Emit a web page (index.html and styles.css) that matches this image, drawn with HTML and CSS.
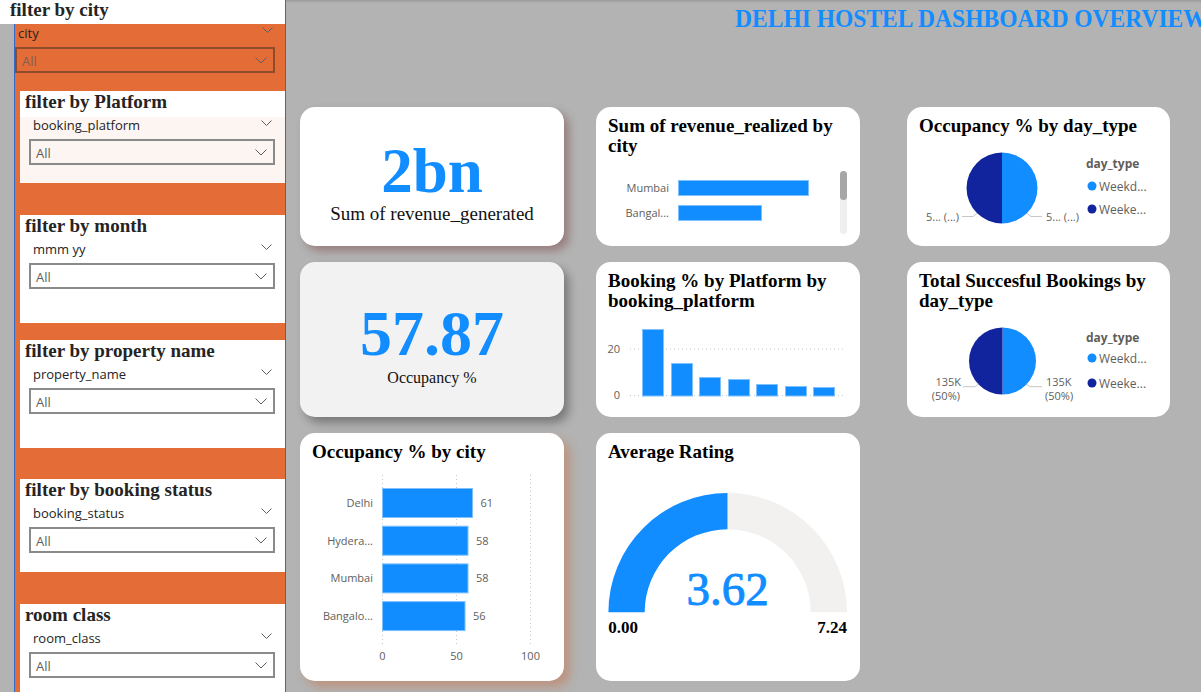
FILE: index.html
```html
<!DOCTYPE html>
<html>
<head>
<meta charset="utf-8">
<title>Delhi Hostel Dashboard</title>
<link rel="stylesheet" href="styles.css">
</head>
<body>
<aside class="side">
  <div class="side-head">filter by city</div>
  <div class="side-panel">
    <div class="s-row city-row"><span>city</span><svg class="chev" width="11" height="7" viewBox="0 0 11 7"><polyline points="0.5,0.5 5.5,5.5 10.5,0.5"/></svg></div>
    <div class="s-box city-box"><span>All</span><svg class="chev" width="12" height="7" viewBox="0 0 12 7"><polyline points="0.5,0.5 6,6 11.5,0.5"/></svg></div>

    <section class="slicer cream gap-a pb-s">
      <div class="s-title">filter by Platform</div>
      <div class="s-body">
        <div class="s-row"><span>booking_platform</span><svg class="chev" width="11" height="7" viewBox="0 0 11 7"><polyline points="0.5,0.5 5.5,5.5 10.5,0.5"/></svg></div>
        <div class="s-box"><span>All</span><svg class="chev" width="12" height="7" viewBox="0 0 12 7"><polyline points="0.5,0.5 6,6 11.5,0.5"/></svg></div>
      </div>
    </section>

    <section class="slicer gap-b pb-l">
      <div class="s-title">filter by month</div>
      <div class="s-body">
        <div class="s-row"><span>mmm yy</span><svg class="chev" width="11" height="7" viewBox="0 0 11 7"><polyline points="0.5,0.5 5.5,5.5 10.5,0.5"/></svg></div>
        <div class="s-box"><span>All</span><svg class="chev" width="12" height="7" viewBox="0 0 12 7"><polyline points="0.5,0.5 6,6 11.5,0.5"/></svg></div>
      </div>
    </section>

    <section class="slicer gap-c pb-l">
      <div class="s-title">filter by property name</div>
      <div class="s-body">
        <div class="s-row"><span>property_name</span><svg class="chev" width="11" height="7" viewBox="0 0 11 7"><polyline points="0.5,0.5 5.5,5.5 10.5,0.5"/></svg></div>
        <div class="s-box"><span>All</span><svg class="chev" width="12" height="7" viewBox="0 0 12 7"><polyline points="0.5,0.5 6,6 11.5,0.5"/></svg></div>
      </div>
    </section>

    <section class="slicer gap-d pb-m">
      <div class="s-title">filter by booking status</div>
      <div class="s-body">
        <div class="s-row"><span>booking_status</span><svg class="chev" width="11" height="7" viewBox="0 0 11 7"><polyline points="0.5,0.5 5.5,5.5 10.5,0.5"/></svg></div>
        <div class="s-box"><span>All</span><svg class="chev" width="12" height="7" viewBox="0 0 12 7"><polyline points="0.5,0.5 6,6 11.5,0.5"/></svg></div>
      </div>
    </section>

    <section class="slicer gap-b pb-l">
      <div class="s-title">room class</div>
      <div class="s-body">
        <div class="s-row"><span>room_class</span><svg class="chev" width="11" height="7" viewBox="0 0 11 7"><polyline points="0.5,0.5 5.5,5.5 10.5,0.5"/></svg></div>
        <div class="s-box"><span>All</span><svg class="chev" width="12" height="7" viewBox="0 0 12 7"><polyline points="0.5,0.5 6,6 11.5,0.5"/></svg></div>
      </div>
    </section>
  </div>
</aside>

<main class="main">
  <header class="dash-title"><span>DELHI HOSTEL DASHBOARD OVERVIEW</span></header>
  <div class="grid">
    <!-- row 1 -->
    <div class="card kpi kpi-rev">
      <div class="kpi-val">2bn</div>
      <div class="kpi-lbl">Sum of revenue_generated</div>
    </div>

    <div class="card">
      <div class="ctitle">Sum of revenue_realized by city</div>
      <svg class="chart" width="264" height="87" viewBox="0 0 264 87">
        <text x="73" y="33" text-anchor="end">Mumbai</text>
        <rect class="bar" x="82.5" y="21.5" width="130" height="15"/>
        <text x="73" y="58" text-anchor="end">Bangal...</text>
        <rect class="bar" x="82.5" y="46.5" width="83" height="15"/>
        <rect x="244" y="12" width="7" height="63" rx="3.5" fill="#efefef"/>
        <rect x="244" y="12" width="7" height="29" rx="3.5" fill="#a6a6a6"/>
      </svg>
    </div>

    <div class="card c3">
      <div class="ctitle one">Occupancy % by day_type</div>
      <svg class="chart" width="263" height="103" viewBox="0 0 263 103">
        <path d="M95 45 L95 9.5 A35.5 35.5 0 0 1 95 80.5 Z" fill="#118dff"/>
        <path d="M95 45 L95 80.5 A35.5 35.5 0 0 1 95 9.5 Z" fill="#12239e"/>
        <polyline class="lead" points="55,73.5 66,73.5 70,70.3"/>
        <polyline class="lead" points="120,70.3 124,73.5 135,73.5"/>
        <text x="52" y="78" text-anchor="end">5... (...)</text>
        <text x="139" y="78">5... (...)</text>
        <text class="lg-title" x="179" y="25">day_type</text>
        <circle cx="185" cy="43" r="4.5" fill="#118dff"/>
        <text class="lg" x="192" y="47.5">Weekd...</text>
        <circle cx="185" cy="66" r="4.5" fill="#12239e"/>
        <text class="lg" x="192" y="70.5">Weeke...</text>
      </svg>
    </div>

    <!-- row 2 -->
    <div class="card kpi kpi-occ">
      <div class="kpi-val">57.87</div>
      <div class="kpi-lbl small">Occupancy %</div>
    </div>

    <div class="card">
      <div class="ctitle">Booking % by Platform by booking_platform</div>
      <svg class="chart" width="264" height="103" viewBox="0 0 264 103">
        <line class="grid-h" x1="34" y1="35" x2="249" y2="35"/>
        <line class="grid-h" x1="34" y1="81.5" x2="249" y2="81.5"/>
        <text x="24" y="39" text-anchor="end">20</text>
        <text x="24" y="85" text-anchor="end">0</text>
        <rect class="bar" x="46.5" y="15.5" width="21" height="66.5"/>
        <rect class="bar" x="75.5" y="49.5" width="21" height="32.5"/>
        <rect class="bar" x="103.5" y="63.5" width="21" height="18.5"/>
        <rect class="bar" x="132.5" y="65.5" width="21" height="16.5"/>
        <rect class="bar" x="160.5" y="70.5" width="21" height="11.5"/>
        <rect class="bar" x="189.5" y="72.5" width="21" height="9.5"/>
        <rect class="bar" x="217.5" y="73.5" width="21" height="8.5"/>
      </svg>
    </div>

    <div class="card c3">
      <div class="ctitle">Total Succesful Bookings by day_type</div>
      <svg class="chart" width="263" height="103" viewBox="0 0 263 103">
        <path d="M95.5 47 L95.5 13.5 A33.5 33.5 0 0 1 95.5 80.5 Z" fill="#118dff"/>
        <path d="M95.5 47 L95.5 80.5 A33.5 33.5 0 0 1 95.5 13.5 Z" fill="#12239e"/>
        <polyline class="lead" points="56,72.7 68,72.7 71.5,70"/>
        <polyline class="lead" points="119.5,70 123,72.7 135,72.7"/>
        <text x="54" y="72" text-anchor="end">135K</text>
        <text x="53" y="86" text-anchor="end">(50%)</text>
        <text x="139" y="72">135K</text>
        <text x="138" y="86">(50%)</text>
        <text class="lg-title" x="179" y="28">day_type</text>
        <circle cx="185" cy="44" r="4.5" fill="#118dff"/>
        <text class="lg" x="192" y="48.5">Weekd...</text>
        <circle cx="185" cy="69" r="4.5" fill="#12239e"/>
        <text class="lg" x="192" y="73.5">Weeke...</text>
      </svg>
    </div>

    <!-- row 3 -->
    <div class="card occ-city">
      <div class="ctitle one">Occupancy % by city</div>
      <svg class="chart" width="264" height="212" viewBox="0 0 264 212">
        <line class="grid-v" x1="82.5" y1="6" x2="82.5" y2="176"/>
        <line class="grid-v" x1="156.5" y1="6" x2="156.5" y2="176"/>
        <line class="grid-v" x1="230.5" y1="6" x2="230.5" y2="176"/>
        <rect class="bar" x="82.5" y="19.5" width="90" height="29"/>
        <rect class="bar" x="82.5" y="57.2" width="85.5" height="29"/>
        <rect class="bar" x="82.5" y="94.9" width="85.5" height="29"/>
        <rect class="bar" x="82.5" y="132.6" width="82.5" height="29"/>
        <text x="73" y="38" text-anchor="end">Delhi</text>
        <text x="73" y="75.7" text-anchor="end">Hydera...</text>
        <text x="73" y="113.4" text-anchor="end">Mumbai</text>
        <text x="73" y="151.1" text-anchor="end">Bangalo...</text>
        <text x="180.5" y="38">61</text>
        <text x="176" y="75.7">58</text>
        <text x="176" y="113.4">58</text>
        <text x="173" y="151.1">56</text>
        <text x="82.5" y="191" text-anchor="middle">0</text>
        <text x="156.5" y="191" text-anchor="middle">50</text>
        <text x="230.5" y="191" text-anchor="middle">100</text>
      </svg>
    </div>

    <div class="card">
      <div class="ctitle one">Average Rating</div>
      <svg class="chart" width="264" height="212" viewBox="0 0 264 212">
        <path d="M12.4 143.3 A119.3 119.3 0 0 1 131.7 24 L131.7 60.3 A83 83 0 0 0 48.7 143.3 Z" fill="#118dff"/>
        <path d="M131.7 24 A119.3 119.3 0 0 1 251 143.3 L214.7 143.3 A83 83 0 0 0 131.7 60.3 Z" fill="#f2f1ef"/>
        <text class="gauge-val" x="131.7" y="136" text-anchor="middle">3.62</text>
        <text class="gauge-end" x="12.3" y="164.3">0.00</text>
        <text class="gauge-end" x="251" y="164.3" text-anchor="end">7.24</text>
      </svg>
    </div>
  </div>
</main>
</body>
</html>
```
FILE: styles.css
```css
* { box-sizing: border-box; }

html, body {
  margin: 0;
  padding: 0;
}

body {
  width: 1201px;
  height: 692px;
  overflow: hidden;
  display: flex;
  background: #b3b3b3;
  font-family: "Liberation Serif", serif;
  color: #252423;
}

/* ---------- sidebar ---------- */
.side {
  width: 286px;
  flex: none;
  display: flex;
  flex-direction: column;
  background: #b3b3b3;
  border-right: 1px solid #2f6bc7;
}

.side-head {
  height: 24px;
  flex: none;
  background: #fff;
  padding: 0 0 0 10px;
  font-weight: bold;
  font-size: 19px;
  line-height: 20px;
  color: #252423;
  white-space: nowrap;
}

.side-panel {
  flex: 1;
  margin-left: 14px;
  border-left: 1px solid #2f6bc7;
  background: #e46c37;
  padding-top: 1px;
  overflow: hidden;
}

.s-row {
  display: flex;
  justify-content: space-between;
  align-items: flex-start;
  height: 16px;
  padding: 0 13px;
  font-family: "Open Sans", sans-serif;
  font-size: 13px;
  line-height: 16px;
  color: #252423;
}

.chev {
  display: block;
  flex: none;
  fill: none;
  stroke: #605e5c;
  stroke-width: 1;
}

.s-row .chev {
  margin-top: 3px;
}

.city-row {
  padding: 0 12px 0 3px;
}

.city-row .chev {
  margin-top: 2px;
}

.s-box {
  margin: 6px 10px 0 9px;
  height: 26px;
  border: 2px solid #8a8a8a;
  display: flex;
  justify-content: space-between;
  align-items: center;
  padding: 2px 6px 0 5px;
  font-family: "Open Sans", sans-serif;
  font-size: 13px;
  color: #605e5c;
}

.s-box .chev {
  margin-top: -2px;
}

.city-box {
  margin: 6px 10px 0 0;
  border-color: #8c4b2c;
  color: #83604f;
}

.slicer {
  margin-left: 5px;
  background: #fff;
}

.s-title {
  height: 26px;
  padding-left: 5px;
  font-weight: bold;
  font-size: 19px;
  line-height: 22px;
  color: #252423;
  white-space: nowrap;
}

.slicer.cream .s-body {
  background: #fcf5f1;
}

.gap-a { margin-top: 18px; }
.gap-b { margin-top: 32px; }
.gap-c { margin-top: 17px; }
.gap-d { margin-top: 31px; }

.pb-s .s-body { padding-bottom: 18px; }
.pb-m .s-body { padding-bottom: 19px; }
.pb-l .s-body { padding-bottom: 34px; }

/* ---------- main ---------- */
.main {
  flex: 1;
  min-width: 0;
  padding-left: 14px;
  overflow: hidden;
  box-shadow: inset 0 3px 3px -2px rgba(0, 0, 0, 0.18);
}

.dash-title {
  height: 107px;
  padding: 3px 0 0 435px;
  white-space: nowrap;
}

.dash-title span {
  display: inline-block;
  font-weight: bold;
  font-size: 26px;
  line-height: 31px;
  color: #118dff;
  transform: scaleX(0.905);
  transform-origin: left center;
}

.grid {
  display: grid;
  grid-template-columns: 264px 264px 278px;
  grid-template-rows: 139px 155px 248px;
  column-gap: 32px;
  row-gap: 16px;
}

.card {
  background: #fff;
  border-radius: 15px;
  display: flex;
  flex-direction: column;
  overflow: hidden;
}

.card.c3 {
  margin-left: 15px;
}

.kpi {
  align-items: center;
  justify-content: center;
  text-align: center;
}

.kpi-rev {
  padding-top: 12px;
  box-shadow: 5px 5px 9px rgba(120, 60, 60, 0.45);
}

.kpi-occ {
  padding-top: 10px;
  background: #f2f2f2;
  box-shadow: 5px 6px 10px rgba(0, 0, 0, 0.32);
}

.kpi-val {
  font-weight: bold;
  font-size: 63px;
  line-height: 63px;
  color: #118dff;
}

.kpi-occ .kpi-val {
  font-size: 64px;
  line-height: 64px;
  margin-bottom: 2px;
}

.kpi-lbl {
  font-size: 19px;
  line-height: 22px;
  color: #111;
}

.kpi-lbl.small {
  font-size: 16px;
  line-height: 20px;
}

.occ-city {
  box-shadow: 6px 6px 10px rgba(205, 100, 50, 0.4);
}

.ctitle {
  height: 52px;
  flex: none;
  padding: 9px 10px 0 12px;
  font-weight: bold;
  font-size: 19px;
  line-height: 20px;
  color: #000;
}

.ctitle.one {
  height: 36px;
}

.chart {
  display: block;
  flex: none;
}

.chart text {
  font-family: "Open Sans", sans-serif;
  font-size: 11px;
  fill: #605e5c;
}

.chart .lg {
  font-size: 12px;
}

.chart .lg-title {
  font-size: 12px;
  font-weight: bold;
}

.chart .bar {
  fill: #118dff;
  stroke: #7fc1ff;
  stroke-width: 1;
}

.chart .lead {
  fill: none;
  stroke: #c8c6c4;
  stroke-width: 1;
}

.chart .grid-h,
.chart .grid-v {
  stroke: #c8c8c8;
  stroke-width: 1;
  stroke-dasharray: 1 3;
}

.chart .gauge-val {
  font-family: "Liberation Serif", serif;
  font-size: 47px;
  fill: #118dff;
  stroke: #118dff;
  stroke-width: 0.9;
}

.chart .gauge-end {
  font-family: "Liberation Serif", serif;
  font-size: 17px;
  font-weight: bold;
  fill: #000;
}
```
